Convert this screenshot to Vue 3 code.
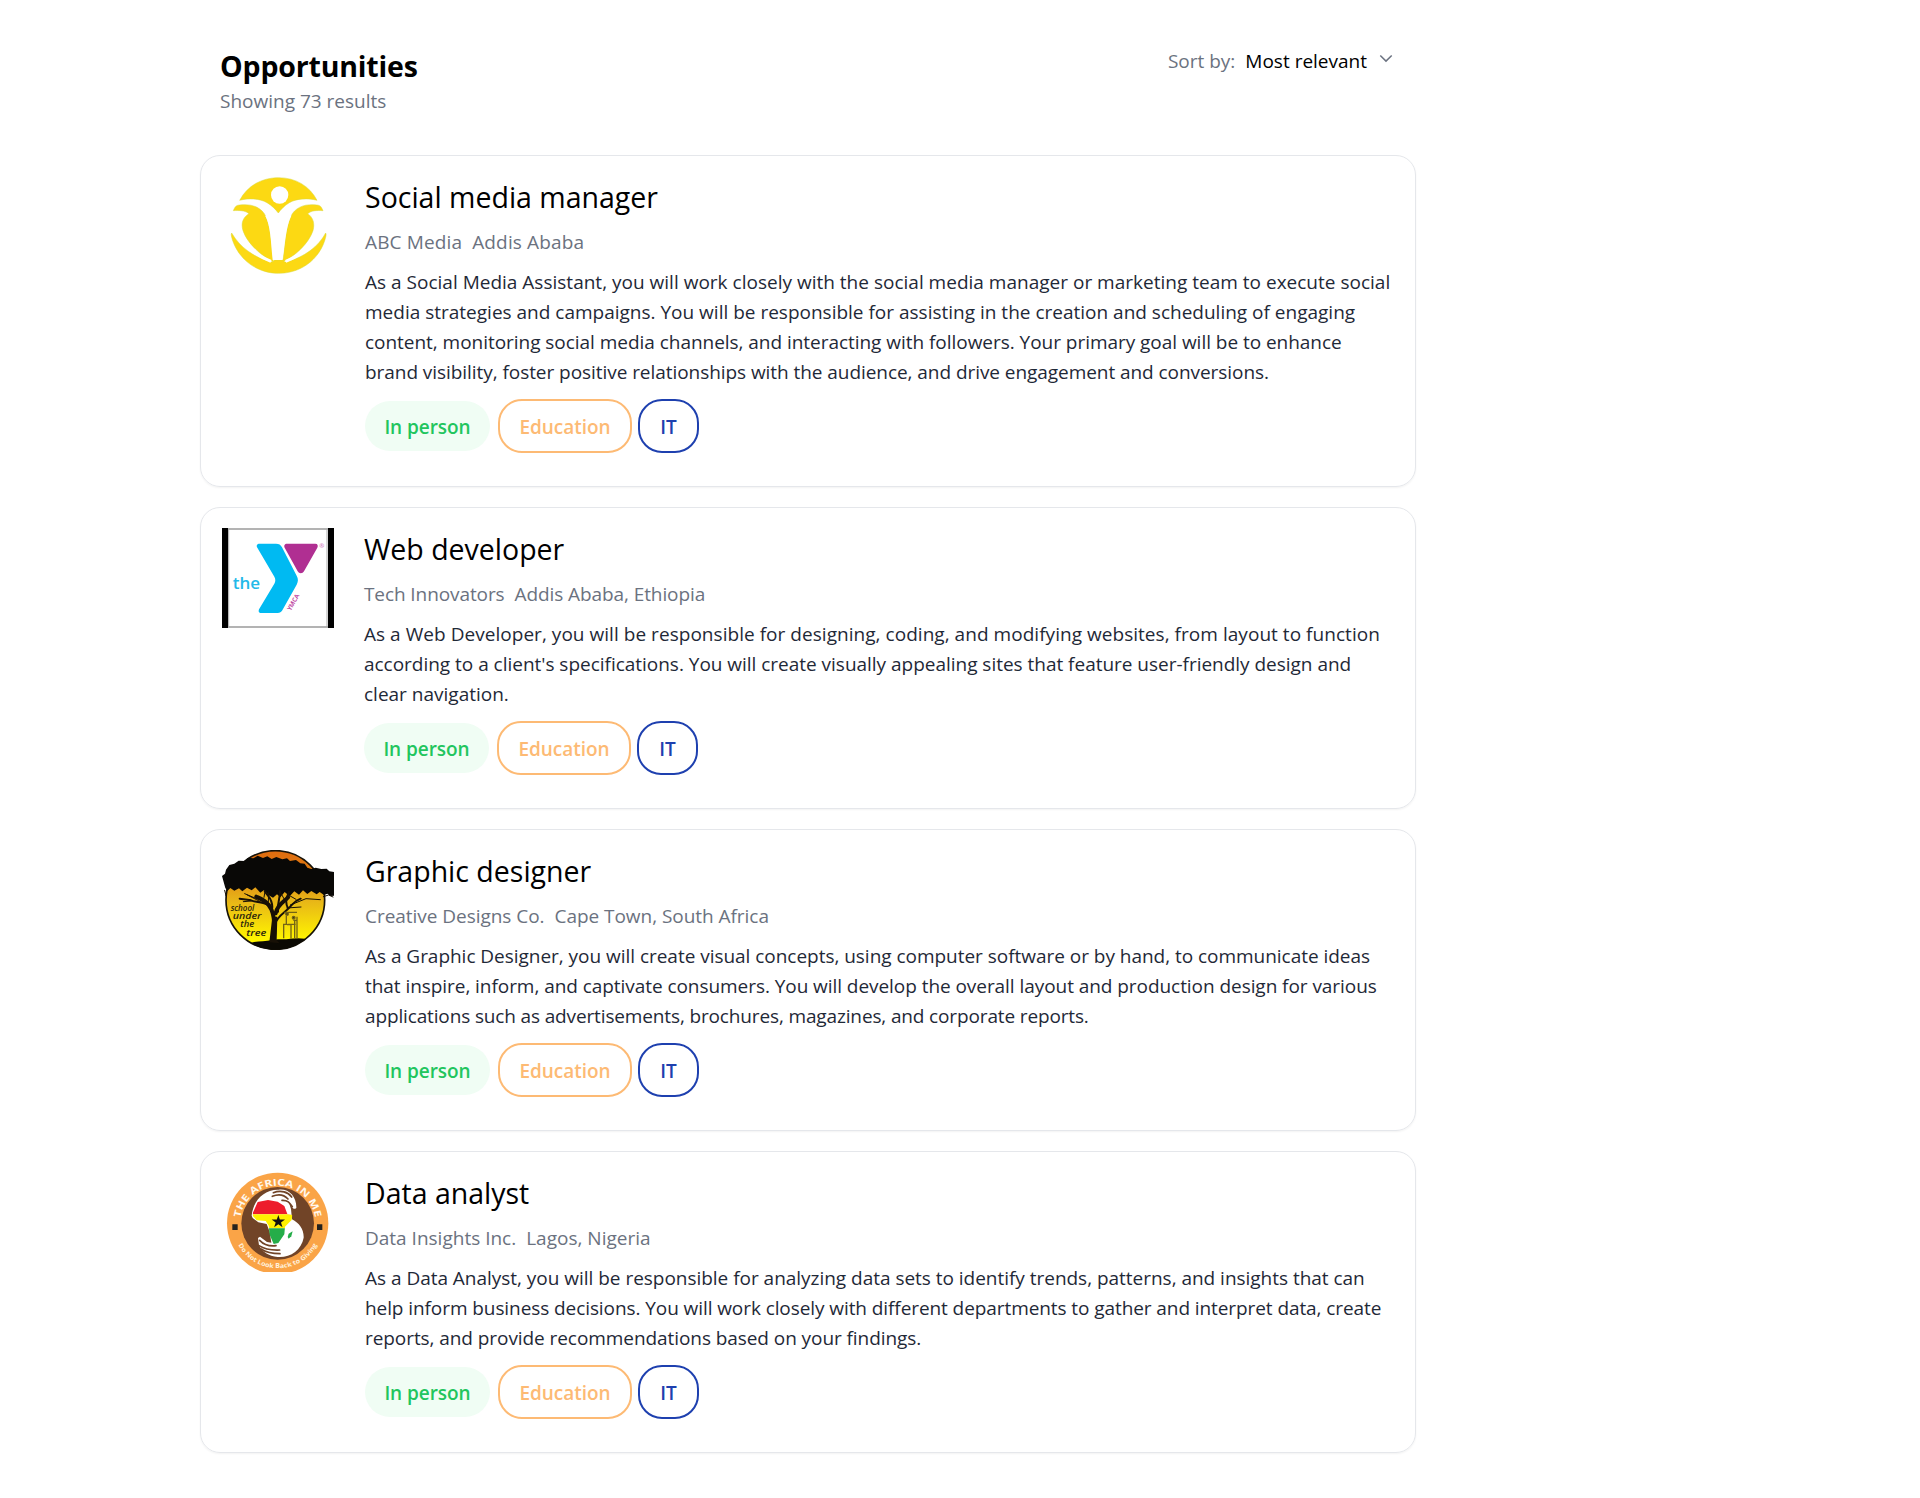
<script setup>
// Each description line is paired with its tracking in pixels.
const jobs = [
  {
    logo: 'media',
    title: 'Social media manager',
    company: 'ABC Media',
    place: 'Addis Ababa',
    metaTracking: 0.14,
    lines: [
      ['As a Social Media Assistant, you will work closely with the social media manager or marketing team to execute social', 0.008],
      ['media strategies and campaigns. You will be responsible for assisting in the creation and scheduling of engaging', 0],
      ['content, monitoring social media channels, and interacting with followers. Your primary goal will be to enhance', -0.036],
      ['brand visibility, foster positive relationships with the audience, and drive engagement and conversions.', -0.056],
    ],
  },
  {
    logo: 'ymca',
    title: 'Web developer',
    company: 'Tech Innovators',
    place: 'Addis Ababa, Ethiopia',
    metaTracking: -0.09,
    lines: [
      ['As a Web Developer, you will be responsible for designing, coding, and modifying websites, from layout to function', 0.04],
      ["according to a client's specifications. You will create visually appealing sites that feature user-friendly design and", -0.02],
      ['clear navigation.', 0],
    ],
  },
  {
    logo: 'tree',
    title: 'Graphic designer',
    company: 'Creative Designs Co.',
    place: 'Cape Town, South Africa',
    metaTracking: -0.04,
    lines: [
      ['As a Graphic Designer, you will create visual concepts, using computer software or by hand, to communicate ideas', -0.03],
      ['that inspire, inform, and captivate consumers. You will develop the overall layout and production design for various', -0.056],
      ['applications such as advertisements, brochures, magazines, and corporate reports.', -0.14],
    ],
  },
  {
    logo: 'africa',
    title: 'Data analyst',
    company: 'Data Insights Inc.',
    place: 'Lagos, Nigeria',
    metaTracking: 0,
    lines: [
      ['As a Data Analyst, you will be responsible for analyzing data sets to identify trends, patterns, and insights that can', -0.024],
      ['help inform business decisions. You will work closely with different departments to gather and interpret data, create', -0.081],
      ['reports, and provide recommendations based on your findings.', -0.07],
    ],
  },
]
</script>

<template>
  <main class="page">
    <header class="head">
      <div>
        <h1>Opportunities</h1>
        <p class="count">Showing 73 results</p>
      </div>
      <div class="sort">
        <span class="sort-label">Sort by:</span>
        <span class="sort-value">Most relevant</span>
        <svg class="chevron" width="14" height="9" viewBox="0 0 14 9"><path d="M1.300 1.500 7 7.100l5.700-5.600" fill="none" stroke="#6b7280" stroke-width="1.500" /></svg>
      </div>
    </header>

    <article v-for="job in jobs" :key="job.title" class="card" :class="job.logo">
      <svg v-if="job.logo === 'media'" class="logo" viewBox="96 93 336 300">
        <g fill="#fcd913" stroke="#d8d838" stroke-width="1.500">
          <path d="M149 166C172 122 215 98 266 98s93 25 115 68c-26-7-61-6-83 7-15 9-25 20-33 31-9-12-20-23-34-31-22-13-56-14-82-7Z" />
          <path d="M130 197c5-12 8-16 18-17 31-4 59 3 75 26 20 32 22 99 27 145-35-18-78-55-91-94-7-23 0-40 18-51-12-10-30-10-47-9Z" />
          <path d="M399 197c-5-12-8-16-18-17-31-4-58 3-74 26-20 32-22 99-29 145 37-18 78-55 91-94 6-23 0-40-16-51 12-10 29-10 46-9Z" />
          <path d="M125 264c25 43 65 72 120 87 6 1 5-6 10-6h23c4 0 3 7 9 6 56-14 98-46 120-87 3 5 0 12-2 20-19 62-75 101-139 101S147 345 127 284c-2-8-5-15-2-20Z" />
        </g>
        <path d="M248 345C243 302 243 243 226 213l38-8 40 7c-18 36-19 91-27 133Z" fill="#fff" />
        <path d="M142 268c24 39 52 61 101 81M388 268c-24 39-52 61-101 81" stroke="#fff" stroke-width="9" fill="none" />
        <circle cx="269" cy="150" r="26" fill="#fff" />
      </svg>

      <svg v-else-if="job.logo === 'ymca'" class="logo" viewBox="96 84 336 300">
        <path fill="#fff" d="M96 84h336v300H96z" />
        <path fill="#999" d="M114 84h300v6H114zM114 378h300v6H114z" opacity=".75" />
        <path fill="#000" d="M96 84h18v300H96zM414 84h18v300h-18z" />
        <path d="M116 88v292M411 88v292" stroke="#aaa" stroke-width="3" />
        <path d="M209 131h49c9 0 14 3 18 11l44 85c5 9 5 17 0 27l-43 77c-4 6-7 8-14 8h-49c-8 0-10-6-6-13l45-75c4-7 4-14 0-21l-51-87c-4-7-1-12 7-12Z" fill="#00baf2" />
        <path d="M291 131h85c7 0 9 6 6 12l-40 71c-4 8-15 8-19 0l-39-71c-3-6 0-12 7-12Z" fill="#b02f92" />
        <text x="128" y="268" class="the" textLength="82" lengthAdjust="spacingAndGlyphs">the</text>
        <text x="388" y="144" class="reg">®</text>
        <text transform="translate(302 334) rotate(-61)" class="ymca-name" textLength="55" lengthAdjust="spacingAndGlyphs">YMCA</text>
      </svg>

      <svg v-else-if="job.logo === 'tree'" class="logo" viewBox="96 75 336 300">
        <defs>
          <linearGradient id="sunset" x1="0" y1="0" x2="0" y2="1">
            <stop offset="0" stop-color="#df6c10" />
            <stop offset=".17" stop-color="#df7810" />
            <stop offset=".5" stop-color="#e7b418" />
            <stop offset=".9" stop-color="#fff500" />
          </linearGradient>
          <clipPath id="disc"><circle cx="256" cy="225" r="149" /></clipPath>
        </defs>
        <circle cx="256" cy="225" r="148" fill="url(#sunset)" stroke="#171309" stroke-width="5" />
        <path d="M96 153l9-7 3-12 10-14 15-4 13-9 17 1 11-10 16 2 13-8 16 7 13-5 13 8 14-6 18 7 14-3 9 8 18-3 13 10 13 1 8 12 12 4 13-4 17 4 16-1 8 8 17 2 7 13 9 2v31l-5 4 3 19-12 8-3-6-13 1-9-7-10 4-13-9-9 7-16-10-12 9-13-11-12 13-14-10-14 15-15-13-13 16-10-9-12 10-14-8-13-15-11 8-15-16-11 9-14-8-14 11-10-9-14 7-12-8-9 9-6-9Z" fill="#090806" />
        <g fill="none" stroke="#171006" stroke-linecap="round">
          <path d="M250 350c6-42 4-72-6-97-10-22-25-28-45-38M257 265c5-26 22-32 37-48" stroke-width="12" />
          <path d="M255 297c8-23 24-31 38-44 17-16 18-25 39-32M242 246c-14-17-37-11-59-20l-34-5M247 247c0-27-14-33-23-49M264 260c-2-28 6-38 6-61M294 250c-10-19-4-33 3-49" stroke-width="6" />
          <path d="M184 228l-24 2M202 222l-38-16M235 231l1-30M283 223l-14-25M301 240l47-19 43 3M318 223l-26-15M211 230l-39-20M291 249l42-3M222 217l3-18M104 196l4 16M400 215l16-5 13 6" stroke-width="3" />
        </g>
        <path d="M174 356c27-10 45-5 74-11 20-5 33 0 47-3 24-4 49-4 68 5-29 32-65 43-107 43-37 0-61-13-82-34Z" fill="#0b0903" clip-path="url(#disc)" />
        <path d="M238 352l9-77h15l-2 70 9 10Z" fill="#171006" />
        <g fill="none" stroke="#746416" stroke-width="4">
          <path d="M289 273v25h-8v42m10-41h12v42m11-54v54m7-54v54m-28-43h24m-7-12h11v-11m-38-13h38" />
          <circle cx="291" cy="267" r="4" fill="#3c3209" /><circle cx="311" cy="278" r="4" fill="#3c3209" />
        </g>
        <g class="hand">
          <text x="122" y="257" textLength="71" lengthAdjust="spacingAndGlyphs">school</text>
          <text x="128" y="282" textLength="86" lengthAdjust="spacingAndGlyphs">under</text>
          <text x="151" y="307" textLength="42" lengthAdjust="spacingAndGlyphs">the</text>
          <text x="169" y="333" textLength="60" lengthAdjust="spacingAndGlyphs">tree</text>
        </g>
      </svg>

      <svg v-else class="logo" viewBox="96 81 336 300">
        <defs>
          <path id="arc-top" d="M150 235a113 113 0 0 1 226 0" />
          <path id="arc-bottom" d="M128 235a135 135 0 0 0 270 0" />
          <path id="continent" d="M188 205l15-34 31-6 29 5 20 13 9 24 15 3-2 15-20 20-2 23-18 26-14 3-12-28-3-27-9-14-27-2-12-14Z" />
          <clipPath id="land"><use href="#continent" /></clipPath>
        </defs>
        <circle cx="263" cy="235" r="152" fill="#faa447" />
        <circle cx="263" cy="235" r="109" fill="#714427" />
        <path d="M185 212c4-44 36-80 82-78 31-3 53 22 52 55-6 5-10 2-13-3l-10-16 7 22 3 31c22 11 36 31 35 55-7 38-42 61-78 58-27-2-47-16-56-35l-3-22 6-4 21 16 13 2-5-33-9-23-25-5-17-13Z" fill="#fff" />
        <g clip-path="url(#land)">
          <path fill="#ed1c2b" d="M180 155h140v53H180z" /><path fill="#fff200" d="M180 208h140v42H180z" /><path fill="#25ad49" d="M180 250h140v55H180z" />
        </g>
        <path d="M293 276l3-10 12-7-4 15-8 7Z" fill="#25ad49" />
        <path d="M265 210l4.500 13.500H285l-12 9 4.500 14-12.500-8.500-12.500 8.500 4.500-14-12-9h15.500Z" fill="#111" />
        <g fill="none" stroke="#714427" stroke-width="5" stroke-linecap="round">
          <path d="M247 154c19-8 36-4 47 8M250 143c23-9 44-2 55 13M276 166c17-1 23 7 31 19M209 286c15 16 31 18 49 16M207 302c17 11 37 14 62 13M213 312c18 12 33 14 57 14" />
        </g>
        <path d="M127 238h16v17h-16zM381 238h16v17h-16z" fill="#25221e" />
        <text class="badge-top"><textPath href="#arc-top" startOffset="17" textLength="320" lengthAdjust="spacingAndGlyphs">THE AFRICA IN ME</textPath></text>
        <text class="badge-bottom"><textPath href="#arc-bottom" startOffset="68" textLength="288" lengthAdjust="spacingAndGlyphs">Do Not Look Back to Giving</textPath></text>
      </svg>

      <div class="body">
        <h2>{{ job.title }}</h2>
        <p class="meta" :style="{ letterSpacing: job.metaTracking + 'px' }"><span>{{ job.company }}</span><span>{{ job.place }}</span></p>
        <p class="desc"><span v-for="[line, tracking] in job.lines" :key="line" :style="{ letterSpacing: tracking + 'px' }">{{ line }}</span></p>
        <div class="tags">
          <span class="tag mode">In person</span>
          <span class="tag education">Education</span>
          <span class="tag it">IT</span>
        </div>
      </div>
    </article>
  </main>
</template>

<style>
body { margin: 0; background: #fff; }
</style>

<style scoped>
.page { box-sizing: border-box; width: 1416px; height: 1498px; padding: 45px 0 0 200px; font-family: "Open Sans", "Noto Sans", sans-serif; font-size: 19px; color: #000; }
h1, h2, p { margin: 0; }
.head { display: flex; justify-content: space-between; height: 110px; padding: 0 23px 0 20px; }
h1 { font-size: 28.5px; line-height: 43px; font-weight: 700; letter-spacing: -0.17px; }
.count { line-height: 26px; color: #6b7280; }
.sort { display: flex; height: 32px; line-height: 32px; }
.sort-label { color: #6b7280; margin-right: 10px; }
.chevron { margin: 9px 0 0 12px; }
.card { box-sizing: border-box; display: flex; width: 1216px; margin-bottom: 20px; padding: 20px 21px 33px; border: 1px solid #e5e7eb; border-radius: 20px; box-shadow: 0 1px 2px rgba(0, 0, 0, .05); }
.logo { flex: none; width: 112px; height: 100px; margin-right: 31px; overflow: hidden; }
.ymca .logo { margin-right: 30px; }
.body { flex: 1; min-width: 0; }
h2 { font-size: 28.5px; line-height: 42px; font-weight: 400; }
.meta { display: flex; gap: 10px; line-height: 30px; margin: 9px 0 10px; color: #6b7280; }
.desc { line-height: 30px; color: #1f2937; }
.desc span { display: block; white-space: nowrap; }
.tags { display: flex; align-items: center; height: 54px; margin-top: 12px; }
.tag { box-sizing: border-box; height: 54px; line-height: 52px; text-align: center; font-weight: 600; letter-spacing: -0.05px; border: 2px solid; border-radius: 24px; }
.mode { width: 125px; height: 50px; border: 0; border-radius: 25px; background: #f0fdf4; color: #22c55e; }
.education { width: 134px; margin-left: 8px; color: #fdba74; }
.it { width: 61px; margin-left: 6px; color: #1e40af; }
.the { font: 600 50px "Open Sans", sans-serif; fill: #22b9e9; }
.reg { font: 700 18px "Open Sans", sans-serif; fill: #d47fc2; }
.ymca-name { font: 700 19px "Open Sans", sans-serif; fill: #bf4ba5; }
.hand { font: italic 600 25px "Open Sans", sans-serif; fill: #2a240c; }
.badge-top { font: 700 29px "Open Sans", sans-serif; fill: #fff8ee; }
.badge-bottom { font: 700 19px "Open Sans", sans-serif; fill: #fff1dd; }
</style>
